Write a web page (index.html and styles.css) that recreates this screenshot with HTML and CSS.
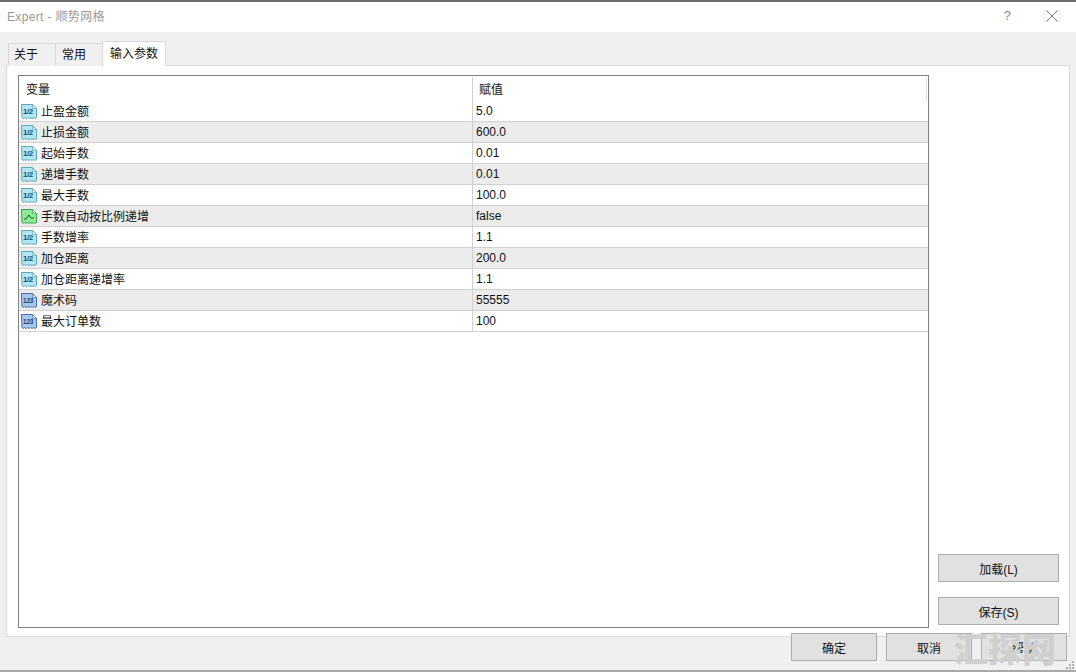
FILE: index.html
```html
<!DOCTYPE html>
<html lang="zh-CN">
<head>
<meta charset="utf-8">
<title>Expert - 顺势网格</title>
<link rel="stylesheet" href="styles.css">
</head>
<body>
<svg class="defs" width="0" height="0" aria-hidden="true">
  <defs>
    <symbol id="doc" viewBox="0 0 16 16">
      <path d="M.5 1.500h11l4 4v9l-1.500 1-1.500-1-1.500 1-1.500-1-1.500 1-1.500-1-1.500 1-1.500-1-1.500 1-1-1z" fill="currentColor" stroke="var(--edge)"/>
      <path d="M11.500 1.500v4h4z" fill="#f4fbfd" stroke="var(--edge)" stroke-width=".7"/>
    </symbol>
  </defs>
</svg>
<div class="window">
  <header class="titlebar">
    <span class="title">Expert - 顺势网格</span>
    <span class="help">?</span>
    <svg class="close" width="12" height="12" viewBox="0 0 12 12"><path d="M.5.500l11 11M11.500.500l-11 11" stroke="#7a7a7a" fill="none"/></svg>
  </header>
  <div class="content">
    <nav class="tabs">
      <span class="tab">关于</span>
      <span class="tab">常用</span>
      <span class="tab active">输入参数</span>
    </nav>
    <section class="panel">
      <div class="table">
        <div class="row head"><span class="c1">变量</span><span class="c2">赋值</span></div>
        <div class="row"><span class="c1"><svg class="ico dbl"><use href="#doc"/><text x="2" y="11">1/2</text></svg>止盈金额</span><span class="c2">5.0</span></div>
        <div class="row alt"><span class="c1"><svg class="ico dbl"><use href="#doc"/><text x="2" y="11">1/2</text></svg>止损金额</span><span class="c2">600.0</span></div>
        <div class="row"><span class="c1"><svg class="ico dbl"><use href="#doc"/><text x="2" y="11">1/2</text></svg>起始手数</span><span class="c2">0.01</span></div>
        <div class="row alt"><span class="c1"><svg class="ico dbl"><use href="#doc"/><text x="2" y="11">1/2</text></svg>递增手数</span><span class="c2">0.01</span></div>
        <div class="row"><span class="c1"><svg class="ico dbl"><use href="#doc"/><text x="2" y="11">1/2</text></svg>最大手数</span><span class="c2">100.0</span></div>
        <div class="row alt"><span class="c1"><svg class="ico bool"><use href="#doc"/><path class="tick" d="M3 11h2l3-4 2 3h3"/></svg>手数自动按比例递增</span><span class="c2">false</span></div>
        <div class="row"><span class="c1"><svg class="ico dbl"><use href="#doc"/><text x="2" y="11">1/2</text></svg>手数增率</span><span class="c2">1.1</span></div>
        <div class="row alt"><span class="c1"><svg class="ico dbl"><use href="#doc"/><text x="2" y="11">1/2</text></svg>加仓距离</span><span class="c2">200.0</span></div>
        <div class="row"><span class="c1"><svg class="ico dbl"><use href="#doc"/><text x="2" y="11">1/2</text></svg>加仓距离递增率</span><span class="c2">1.1</span></div>
        <div class="row alt"><span class="c1"><svg class="ico int"><use href="#doc"/><text x="2" y="11">123</text></svg>魔术码</span><span class="c2">55555</span></div>
        <div class="row"><span class="c1"><svg class="ico int"><use href="#doc"/><text x="2" y="11">123</text></svg>最大订单数</span><span class="c2">100</span></div>
      </div>
      <aside class="side">
        <button class="btn side-btn">加载(L)</button>
        <button class="btn side-btn">保存(S)</button>
      </aside>
    </section>
    <footer class="actions">
      <button class="btn act">确定</button>
      <button class="btn act">取消</button>
      <button class="btn act">帮助</button>
    </footer>
  </div>
  <div class="watermark">汇探网</div>
  <svg class="grip" width="10" height="10" viewBox="0 0 10 10"><path d="M7 1h2v2H7zM4 4h2v2H4zM7 4h2v2H7zM1 7h2v2H1zM4 7h2v2H4zM7 7h2v2H7z" fill="#b4b4b4"/></svg>
</div>
</body>
</html>
```

FILE: styles.css
```css
* { box-sizing: border-box; }
html, body { margin: 0; padding: 0; }
body {
  width: 1076px;
  height: 672px;
  overflow: hidden;
  font-family: "Liberation Sans", "Noto Sans CJK SC", sans-serif;
  font-size: 12px;
  color: #111;
  background: #f0f0f0;
}
.defs { position: absolute; }
.window {
  position: relative;
  width: 1076px;
  height: 672px;
  display: flex;
  flex-direction: column;
  border-top: 2px solid #6d6d6d;
  border-bottom: 2px solid #a8a8a8;
}
.titlebar {
  height: 30px;
  flex: none;
  background: #fff;
  display: flex;
  align-items: center;
  padding: 0 18px 3px 7px;
}
.title { color: #9a9a9a; font-size: 12px; letter-spacing: .35px; flex: 1; }
.help { color: #8a8a8a; font-size: 13px; margin-right: 35px; }
.content {
  flex: 1;
  padding: 9px 6px 0 6px;
  display: flex;
  flex-direction: column;
  background: #f0f0f0;
}
.tabs { display: flex; height: 24px; flex: none; padding-left: 2px; position: relative; z-index: 1; }
.tab {
  width: 47px;
  height: 23px;
  margin-top: 2px;
  padding-left: 5px;
  line-height: 22px;
  background: #f0f0f0;
  border: 1px solid #d9d9d9;
  border-bottom: 0;
  border-right: 0;
}
.tab + .tab { padding-left: 6px; }
.tab.active {
  width: 64px;
  height: 25px;
  margin-top: 0;
  padding-left: 7px;
  line-height: 24px;
  background: #fff;
  border-right: 1px solid #d9d9d9;
}
.panel {
  height: 572px;
  flex: none;
  background: #fff;
  border: 1px solid #d9d9d9;
  display: flex;
  padding: 9px 9px 7px 11px;
}
.table {
  width: 911px;
  height: 553px;
  flex: none;
  border: 1px solid #7f8085;
  padding-top: 1px;
}
.row {
  display: flex;
  height: 21px;
  align-items: center;
  border-bottom: 1px solid #d0d0d0;
}
.row.head { height: 24px; border-bottom: 0; }
.row.alt { background: #ececec; }
.c1 {
  width: 454px;
  height: 100%;
  flex: none;
  display: flex;
  align-items: center;
  padding: 0 0 2px 2px;
  border-right: 1px solid #d0d0d0;
}
.head .c1 { padding-left: 7px; }
.c2 { padding-left: 3px; flex: 1; height: 100%; display: flex; align-items: center; }
.head .c2 { border-right: 1px solid #e2e2e2; margin-right: 1px; padding: 0 0 2px 6px; }
.ico { width: 16px; height: 16px; flex: none; margin: 2px 4px 0 0; }
.ico text { font: bold 8px "Liberation Sans", sans-serif; }
.dbl { color: #b2e6f0; --edge: #5aa8bf; }
.dbl text { fill: #174f72; letter-spacing: -.5px; }
.bool { color: #8bee94; --edge: #3f9f5a; }
.tick { fill: none; stroke: #145a25; stroke-width: 1; }
.int { color: #a9c9ec; --edge: #3f6fa8; }
.int text { fill: #123f86; font-size: 6.500px; letter-spacing: -.2px; }
.side {
  flex: 1;
  padding: 479px 0 0 9px;
  display: flex;
  flex-direction: column;
  gap: 15px;
}
.btn {
  font: inherit;
  color: #111;
  background: #e1e1e1;
  border: 1px solid #adadad;
  padding: 0;
}
.side-btn { width: 121px; height: 28px; flex: none; }
.actions {
  display: flex;
  justify-content: flex-end;
  gap: 9px;
  margin-top: -4px;
  padding-right: 3px;
  position: relative;
}
.act { width: 86px; height: 28px; }
.watermark {
  position: absolute;
  left: 954px;
  top: 626px;
  font-family: "Noto Sans CJK SC", sans-serif;
  font-weight: 900;
  font-size: 34px;
  line-height: 40px;
  color: #cfcfcf;
  white-space: nowrap;
}
.grip { position: absolute; right: 1px; bottom: 0; }
```
